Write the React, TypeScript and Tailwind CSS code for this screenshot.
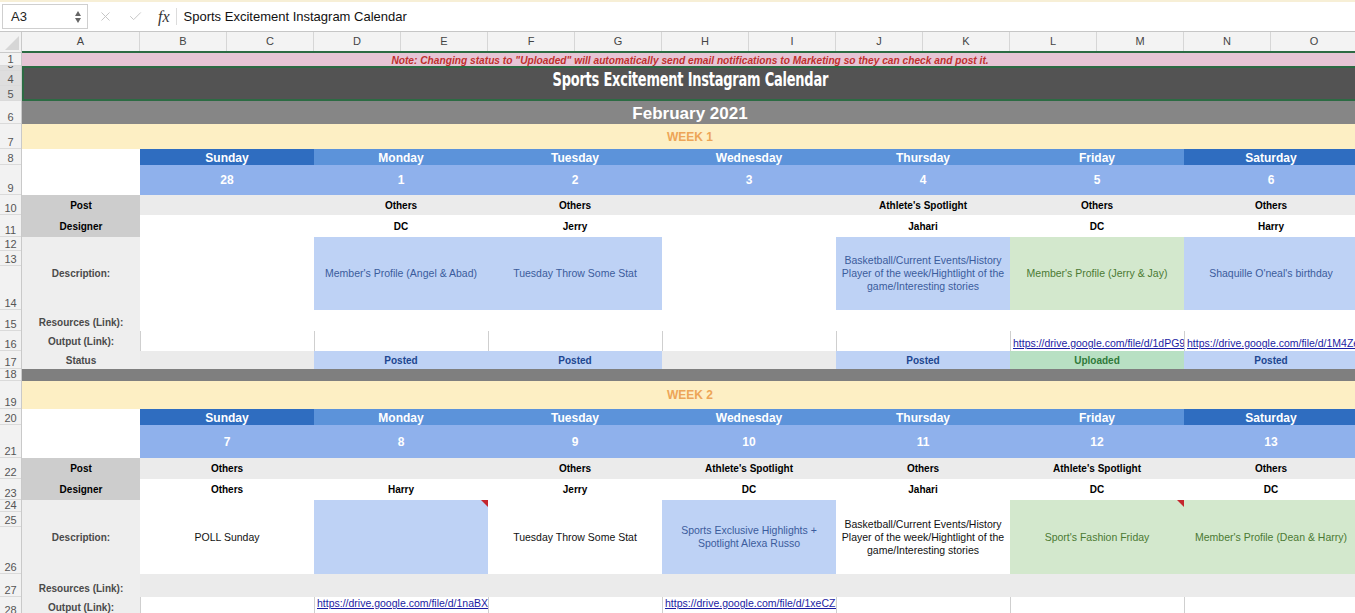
import { X, Check } from 'lucide-react';
import type { ReactNode } from 'react';

type Tone = 'none' | 'blue' | 'green' | 'plain';
type Desc = { t?: string; tone: Tone; note?: boolean };

const DAYS = ['Sunday', 'Monday', 'Tuesday', 'Wednesday', 'Thursday', 'Friday', 'Saturday'];
const LETTERS = ['A', 'B', 'C', 'D', 'E', 'F', 'G', 'H', 'I', 'J', 'K', 'L', 'M', 'N', 'O'];
const BASKET = 'Basketball/Current Events/History\nPlayer of the week/Hightlight of the\ngame/Interesting stories';

const toneClass: Record<Tone, string> = {
  none: 'bg-white',
  blue: 'bg-[#bed2f5] text-[#3b5c9c]',
  green: 'bg-[#d3e8cd] text-[#4b7a33]',
  plain: 'bg-white text-[#111]',
};

const statusClass: Record<string, string> = {
  '': 'bg-[#ebebeb]',
  Posted: 'bg-[#bed2f5] text-[#1d4690]',
  Uploaded: 'bg-[#b8e0c3] text-[#2f7a3a]',
};

const WEEKS = [
  {
    label: 'WEEK 1',
    n: 7,
    h: {
      week: 'h-[25px]',
      days: 'h-[16px]',
      dates: 'h-[30px]',
      post: 'h-[20px]',
      designer: 'h-[22px]',
      desc: ['h-[14px]', 'h-[15px]', 'h-[44px]'],
      descTotal: 'h-[73px]',
      res: 'h-[21px]',
      out: 'h-[20px]',
      status: 'h-[18px]',
    },
    resBg: 'bg-white',
    outAlign: 'items-end pb-[1px]',
    dates: ['28', '1', '2', '3', '4', '5', '6'],
    post: ['', 'Others', 'Others', '', "Athlete's Spotlight", 'Others', 'Others'],
    designer: ['', 'DC', 'Jerry', '', 'Jahari', 'DC', 'Harry'],
    desc: [
      { tone: 'none' },
      { t: "Member's Profile (Angel & Abad)", tone: 'blue' },
      { t: 'Tuesday Throw Some Stat', tone: 'blue' },
      { tone: 'none' },
      { t: BASKET, tone: 'blue' },
      { t: "Member's Profile (Jerry & Jay)", tone: 'green' },
      { t: "Shaquille O'neal's birthday", tone: 'blue' },
    ] as Desc[],
    out: ['', '', '', '', '', 'https://drive.google.com/file/d/1dPG9kQw2', 'https://drive.google.com/file/d/1M4Ze8rT'],
    status: ['', 'Posted', 'Posted', '', 'Posted', 'Uploaded', 'Posted'],
  },
  {
    label: 'WEEK 2',
    n: 19,
    h: {
      week: 'h-[28px]',
      days: 'h-[16px]',
      dates: 'h-[33px]',
      post: 'h-[21px]',
      designer: 'h-[21px]',
      desc: ['h-[12px]', 'h-[15px]', 'h-[47px]'],
      descTotal: 'h-[74px]',
      res: 'h-[23px]',
      out: 'h-[20px]',
      status: 'h-[18px]',
    },
    resBg: 'bg-[#ebebeb]',
    outAlign: 'items-start pt-0',
    dates: ['7', '8', '9', '10', '11', '12', '13'],
    post: ['Others', '', 'Others', "Athlete's Spotlight", 'Others', "Athlete's Spotlight", 'Others'],
    designer: ['Others', 'Harry', 'Jerry', 'DC', 'Jahari', 'DC', 'DC'],
    desc: [
      { t: 'POLL Sunday', tone: 'plain' },
      { tone: 'blue', note: true },
      { t: 'Tuesday Throw Some Stat', tone: 'plain' },
      { t: 'Sports Exclusive Highlights +\nSpotlight Alexa Russo', tone: 'blue' },
      { t: BASKET, tone: 'plain' },
      { t: "Sport's Fashion Friday", tone: 'green', note: true },
      { t: "Member's Profile (Dean & Harry)", tone: 'green' },
    ] as Desc[],
    out: ['', 'https://drive.google.com/file/d/1naBXp4', '', 'https://drive.google.com/file/d/1xeCZu7', '', '', ''],
    status: ['', '', '', '', '', '', ''],
  },
];

function Nums({ rows, sel }: { rows: { n: string; h: string }[]; sel?: boolean }) {
  return (
    <div className={`w-[22px] shrink-0 flex flex-col border-r border-[#c9c9c9] ${sel ? 'bg-[#dedede]' : 'bg-[#f2f2f2]'}`}>
      {rows.map((r) => (
        <div
          key={r.n}
          className={`${r.h} flex items-end justify-center border-b border-[#dadada] text-[11px] leading-[12px] text-[#555] overflow-hidden`}
        >
          {r.n}
        </div>
      ))}
    </div>
  );
}

function Line({ nums, h, sel, children }: { nums: { n: string; h: string }[]; h: string; sel?: boolean; children: ReactNode }) {
  return (
    <div className={`flex ${h}`}>
      <Nums rows={nums} sel={sel} />
      <div className="grid grid-cols-[118px_repeat(7,174px)] min-w-0 flex-1 overflow-hidden">{children}</div>
    </div>
  );
}

function Week({ w }: { w: (typeof WEEKS)[number] }) {
  const n = w.n;
  const one = (k: number, h: string) => [{ n: String(n + k), h }];

  return (
    <>
      <Line nums={one(0, w.h.week)} h={w.h.week}>
        <div className="col-span-8 bg-[#fdefc4] flex items-center justify-center text-[12px] font-bold text-[#eda557]">
          {w.label}
        </div>
      </Line>

      <Line nums={one(1, w.h.days)} h={w.h.days}>
        <div className="bg-white" />
        {DAYS.map((d, i) => (
          <div
            key={d}
            className={`flex items-center justify-center text-[12px] font-bold text-white ${i === 0 || i === 6 ? 'bg-[#2f6dc0]' : 'bg-[#5c93da]'}`}
          >
            {d}
          </div>
        ))}
      </Line>

      <Line nums={one(2, w.h.dates)} h={w.h.dates}>
        <div className="bg-white" />
        {w.dates.map((d) => (
          <div key={d} className="bg-[#8fb1ec] flex items-center justify-center text-[12px] font-bold text-white">
            {d}
          </div>
        ))}
      </Line>

      <Line nums={one(3, w.h.post)} h={w.h.post}>
        <div className="bg-[#cdcdcd] flex items-center justify-center text-[10px] font-bold text-black">Post</div>
        {w.post.map((p, i) => (
          <div key={i} className="bg-[#ebebeb] flex items-center justify-center text-[10px] font-bold text-black">
            {p}
          </div>
        ))}
      </Line>

      <Line nums={one(4, w.h.designer)} h={w.h.designer}>
        <div className="bg-[#cdcdcd] flex items-center justify-center text-[10px] font-bold text-black">Designer</div>
        {w.designer.map((p, i) => (
          <div key={i} className="bg-white flex items-center justify-center text-[10px] font-bold text-black">
            {p}
          </div>
        ))}
      </Line>

      <Line
        nums={[
          { n: String(n + 5), h: w.h.desc[0] },
          { n: String(n + 6), h: w.h.desc[1] },
          { n: String(n + 7), h: w.h.desc[2] },
        ]}
        h={w.h.descTotal}
      >
        <div className="bg-[#eeeeee] flex items-center justify-center text-[10px] font-bold text-[#4a4a4a]">Description:</div>
        {w.desc.map((d, i) => (
          <div
            key={i}
            className={`relative flex items-center justify-center text-center whitespace-pre-line px-1 text-[10.5px] leading-[13px] ${toneClass[d.tone]}`}
          >
            {d.t}
            {d.note && (
              <span className="absolute top-0 right-0 w-0 h-0 border-l-[7px] border-l-transparent border-t-[7px] border-t-[#c4262d]" />
            )}
          </div>
        ))}
      </Line>

      <Line nums={one(8, w.h.res)} h={w.h.res}>
        <div className="bg-[#eeeeee] flex items-end justify-center pb-[1px] text-[10px] font-bold text-[#4a4a4a]">
          Resources (Link):
        </div>
        {DAYS.map((d) => (
          <div key={d} className={w.resBg} />
        ))}
      </Line>

      <Line nums={one(9, w.h.out)} h={w.h.out}>
        <div className="bg-[#eeeeee] flex items-center justify-center text-[10px] font-bold text-[#4a4a4a]">Output (Link):</div>
        {w.out.map((o, i) => (
          <div key={i} className={`bg-white border-l border-[#cfcfcf] flex pl-[2px] overflow-hidden whitespace-nowrap ${w.outAlign}`}>
            {o && <span className="text-[10.5px] leading-[13px] text-[#1c1ca3] underline">{o}</span>}
          </div>
        ))}
      </Line>

      <Line nums={one(10, w.h.status)} h={w.h.status}>
        <div className="bg-[#eeeeee] flex items-center justify-center text-[10px] font-bold text-[#4a4a4a]">Status</div>
        {w.status.map((s, i) => (
          <div key={i} className={`flex items-center justify-center text-[10px] font-bold ${statusClass[s]}`}>
            {s}
          </div>
        ))}
      </Line>
    </>
  );
}

export default function App() {
  return (
    <div className="w-[1355px] h-[613px] overflow-hidden bg-white font-['Liberation_Sans',Arial,sans-serif] text-black">
      {/* formula bar */}
      <div className="h-[32px] flex items-stretch border-t-2 border-[#f7efd6] border-b border-b-[#c6c6c6] bg-white">
        <div className="w-[86px] shrink-0 my-[2px] ml-[2px] border border-[#cfcfcf] flex items-center justify-between pl-[8px] pr-[6px]">
          <span className="text-[13px] text-[#222]">A3</span>
          <span className="flex flex-col items-center gap-[2px]">
            <span className="w-0 h-0 border-x-[3.5px] border-x-transparent border-b-[5px] border-b-[#666]" />
            <span className="w-0 h-0 border-x-[3.5px] border-x-transparent border-t-[5px] border-t-[#666]" />
          </span>
        </div>
        <div className="flex items-center pl-[10px] gap-[15px]">
          <X size={15} strokeWidth={1.5} className="text-[#c2c2c2]" />
          <Check size={15} strokeWidth={1.5} className="text-[#c2c2c2]" />
          <span className="font-['Liberation_Serif',serif] italic text-[16px] text-[#333]">fx</span>
        </div>
        <div className="w-px my-[6px] bg-[#dcdcdc] ml-[6px]" />
        <div className="flex items-center pl-[7px] text-[13px] text-[#111]">Sports Excitement Instagram Calendar</div>
      </div>

      {/* column letters */}
      <div className="flex h-[21px]">
        <div className="w-[22px] shrink-0 bg-[#f2f2f2] border-r border-b border-[#c9c9c9] relative">
          <svg width="22" height="21" className="absolute inset-0">
            <polygon points="19,4 19,18 5,18" fill="#d6d6d6" />
          </svg>
        </div>
        <div className="grid grid-cols-[118px_repeat(14,87px)] flex-1 overflow-hidden bg-[#f3f3f3] border-b-2 border-[#2c6b43]">
          {LETTERS.map((l) => (
            <div key={l} className="flex items-center justify-center text-[11px] text-[#444] border-r border-[#d6d6d6]">
              {l}
            </div>
          ))}
        </div>
      </div>

      {/* row 1 note */}
      <Line nums={[{ n: '1', h: 'h-[13px]' }]} h="h-[13px]">
        <div className="col-span-8 bg-[#e6c5d5] flex items-center justify-center text-[10.2px] font-bold italic text-[#c0302e] whitespace-nowrap">
          Note: Changing status to "Uploaded" will automatically send email notifications to Marketing so they can check and post it.
        </div>
      </Line>

      {/* rows 3-5 title */}
      <Line
        sel
        nums={[
          { n: '3', h: 'h-[5px]' },
          { n: '4', h: 'h-[15px]' },
          { n: '5', h: 'h-[15px]' },
        ]}
        h="h-[35px]"
      >
        <div className="col-span-8 bg-[#535353] border-2 border-[#2c6b43] flex items-center justify-center pb-[8px] overflow-hidden">
          <span className="inline-block scale-x-[0.76] font-['DejaVu_Sans_Condensed','DejaVu_Sans',sans-serif] font-bold text-[19px] tracking-[-0.3px] text-white whitespace-nowrap">
            Sports Excitement Instagram Calendar
          </span>
        </div>
      </Line>

      {/* row 6 month */}
      <Line nums={[{ n: '6', h: 'h-[23px]' }]} h="h-[23px]">
        <div className="col-span-8 bg-[#868686] flex items-center justify-center text-[17px] font-bold text-white">
          February 2021
        </div>
      </Line>

      <Week w={WEEKS[0]} />

      {/* row 18 separator */}
      <Line nums={[{ n: '18', h: 'h-[12px]' }]} h="h-[12px]">
        <div className="col-span-8 bg-[#7f7f7f]" />
      </Line>

      <Week w={WEEKS[1]} />
    </div>
  );
}
